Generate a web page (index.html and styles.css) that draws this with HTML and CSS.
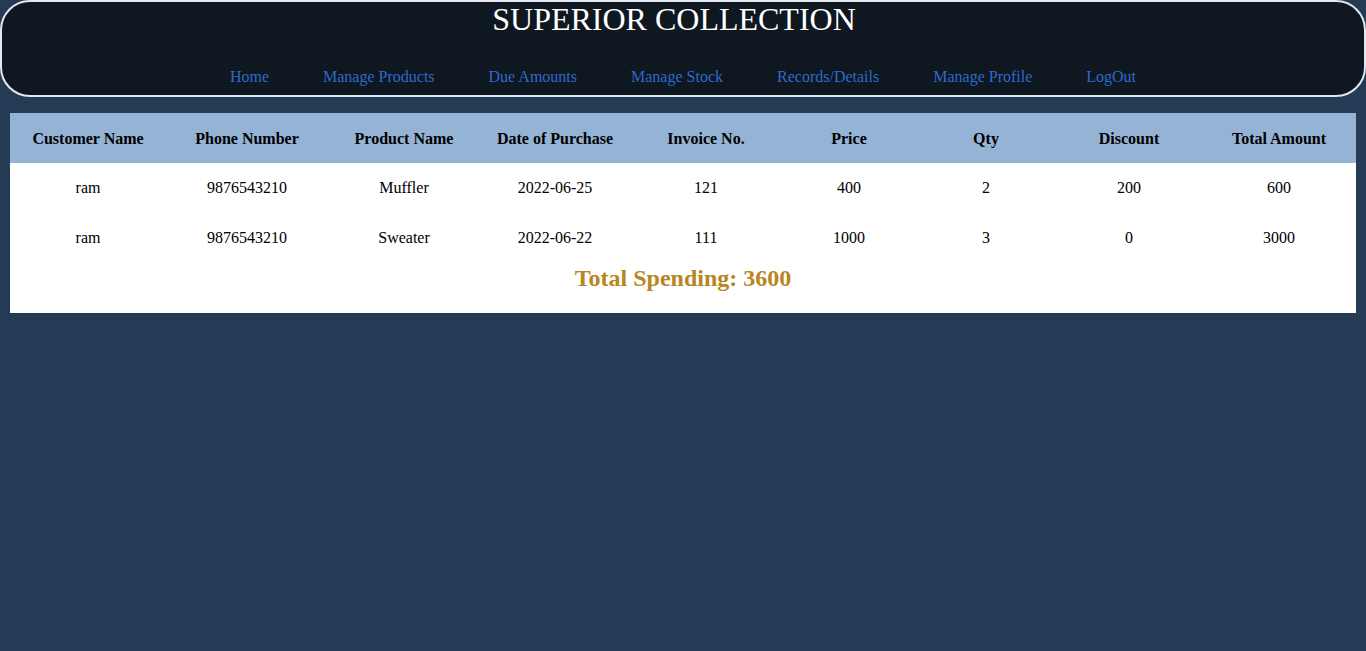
FILE: index.html
```html
<!DOCTYPE html>
<html>
<head>
<meta charset="utf-8">
<title>Superior Collection</title>
<link rel="stylesheet" href="styles.css">
</head>
<body>
<header class="header">
  <h1 class="title">SUPERIOR COLLECTION</h1>
  <nav class="nav">
    <a href="#">Home</a>
    <a href="#">Manage Products</a>
    <a href="#">Due Amounts</a>
    <a href="#">Manage Stock</a>
    <a href="#">Records/Details</a>
    <a href="#">Manage Profile</a>
    <a href="#">LogOut</a>
  </nav>
</header>
<main class="panel">
  <table class="records">
    <colgroup>
      <col class="c1"><col class="c2"><col class="c3"><col class="c4"><col class="c5"><col class="c6"><col class="c7"><col class="c8"><col class="c9">
    </colgroup>
    <thead>
      <tr>
        <th>Customer Name</th>
        <th>Phone Number</th>
        <th>Product Name</th>
        <th>Date of Purchase</th>
        <th>Invoice No.</th>
        <th>Price</th>
        <th>Qty</th>
        <th>Discount</th>
        <th>Total Amount</th>
      </tr>
    </thead>
    <tbody>
      <tr>
        <td>ram</td><td>9876543210</td><td>Muffler</td><td>2022-06-25</td><td>121</td><td>400</td><td>2</td><td>200</td><td>600</td>
      </tr>
      <tr>
        <td>ram</td><td>9876543210</td><td>Sweater</td><td>2022-06-22</td><td>111</td><td>1000</td><td>3</td><td>0</td><td>3000</td>
      </tr>
    </tbody>
  </table>
  <h2 class="total">Total Spending: 3600</h2>
</main>
</body>
</html>
```
FILE: styles.css
```css
html, body {
  margin: 0;
  padding: 0;
}
body {
  background: #243a55;
  font-family: "Liberation Serif", "Times New Roman", serif;
  min-height: 651px;
}
.header {
  box-sizing: border-box;
  height: 97px;
  background: #0f1720;
  border: 2px solid #e3e8ef;
  border-radius: 30px;
  display: flex;
  flex-direction: column;
  align-items: center;
}
.title {
  margin: 0;
  padding-right: 18px;
  font-size: 32px;
  font-weight: normal;
  line-height: 34px;
  color: #ffffff;
}
.nav {
  display: flex;
  gap: 54px;
  margin-top: 32px;
  font-size: 16px;
  line-height: 18px;
}
.nav a {
  color: #2d6bcb;
  text-decoration: none;
}
.panel {
  margin: 16px 10px 0 10px;
  background: #ffffff;
  height: 200px;
}
.records {
  width: 100%;
  border-collapse: collapse;
  font-size: 16px;
}
.records th {
  background: #95b3d5;
  height: 49px;
  padding: 0;
  padding-top: 1px;
  font-weight: bold;
  color: #000;
  text-align: center;
}
.records td {
  height: 50px;
  padding: 0;
  text-align: center;
  color: #000;
}
.c1 { width: 156px; }
.c2 { width: 162px; }
.c3 { width: 152px; }
.c4 { width: 150px; }
.c5 { width: 152px; }
.c6 { width: 134px; }
.c7 { width: 140px; }
.c8 { width: 146px; }
.c9 { width: 154px; }
.c9 { padding-left: 4px; }
.total {
  margin: 0;
  text-align: center;
  color: #b8861f;
  font-size: 24px;
  font-weight: bold;
  line-height: 30px;
}
```
